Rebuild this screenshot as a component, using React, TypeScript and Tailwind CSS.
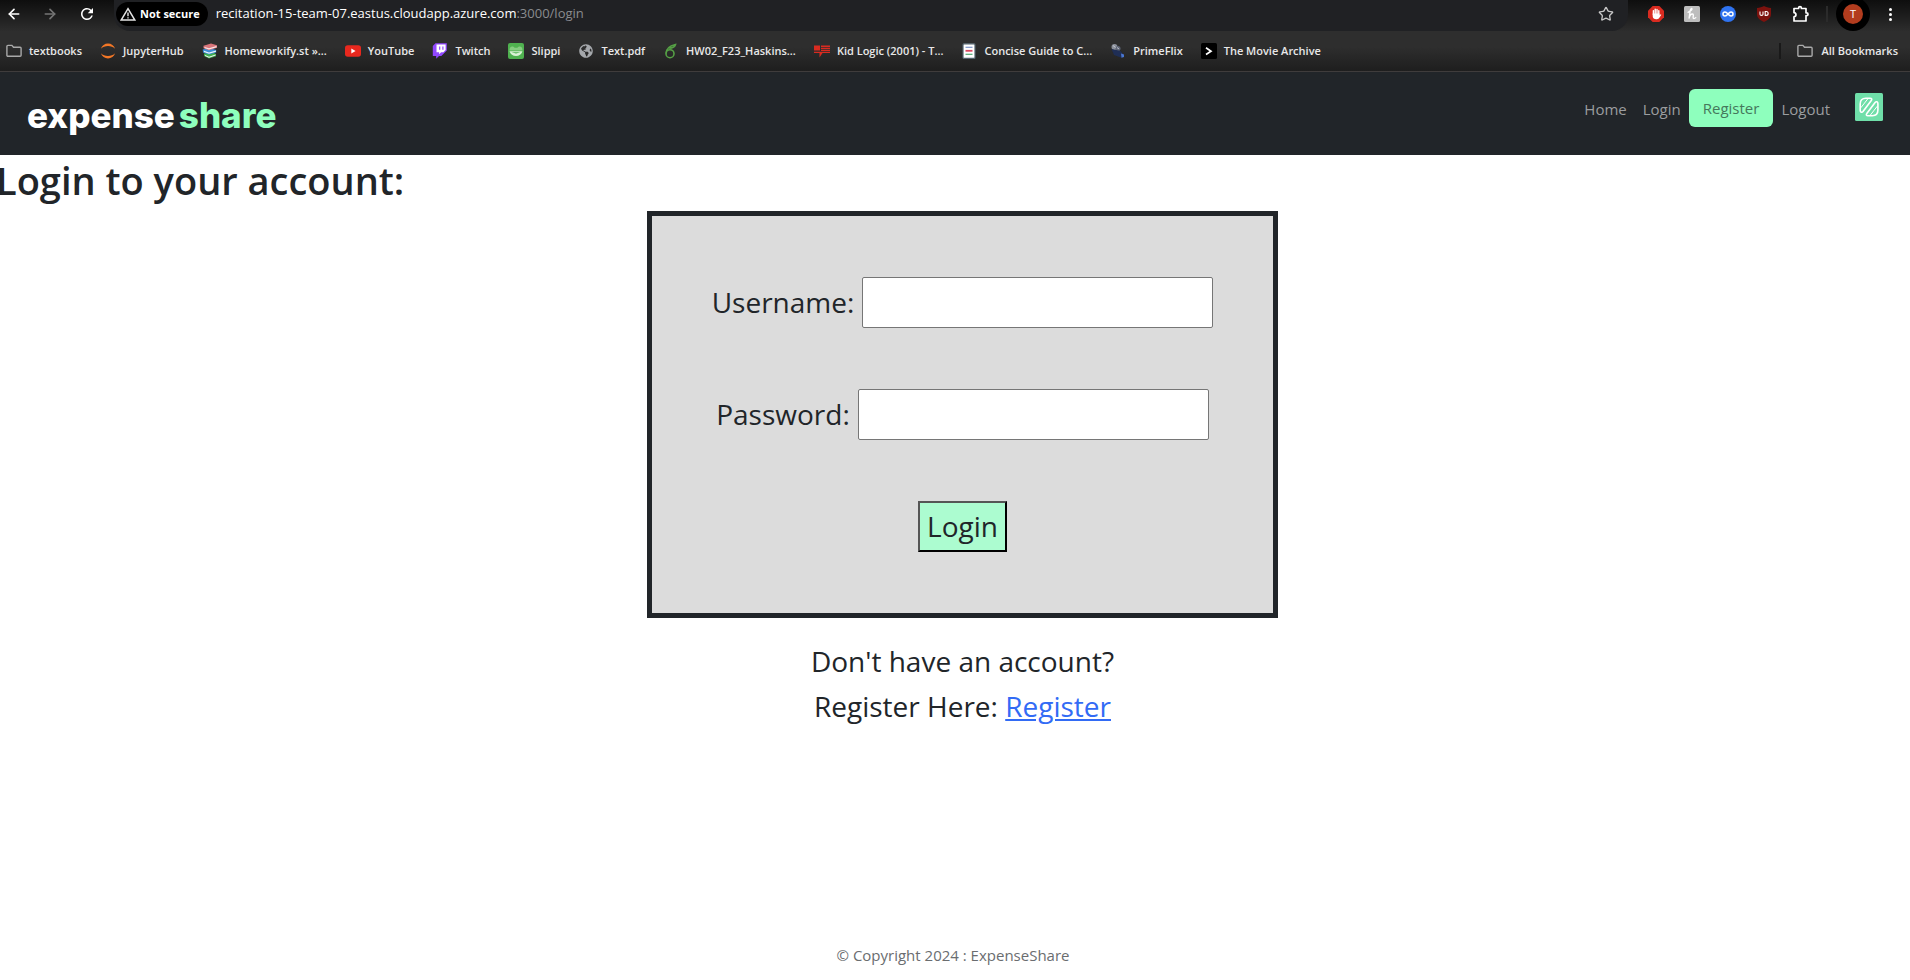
import React from "react";
import {
  ArrowLeft,
  ArrowRight,
  Star,
  Infinity as InfinityIcon,
} from "lucide-react";
import { MdRefresh } from "react-icons/md";
import { FaGlobeAmericas } from "react-icons/fa";

function FolderIcon() {
  return (
    <svg viewBox="0 0 16 16" className="size-4" fill="none" stroke="#a9a9a9" strokeWidth="1.4">
      <path d="M.9 12.3V3.4a1 1 0 0 1 1-1h4l1.6 1.9h6.6a1 1 0 0 1 1 1v7a1 1 0 0 1-1 1H1.9a1 1 0 0 1-1-1z" />
    </svg>
  );
}

function JupyterIcon() {
  return (
    <svg viewBox="0 0 16 16" className="size-4" fill="#f37726">
      <path d="M.9 5.7C2 2.5 4.700.5 8 .5s6 2 7.100 5.200C13.300 4 10.800 3.100 8 3.100S2.700 4 .9 5.700z" />
      <path d="M.9 10.300C2 13.500 4.700 15.500 8 15.500s6-2 7.100-5.200c-1.800 1.700-4.300 2.600-7.100 2.600s-5.300-.9-7.100-2.600z" />
    </svg>
  );
}

function BooksIcon() {
  return (
    <svg viewBox="0 0 16 16" className="size-4">
      <path d="M2 10.500l8-1.500 4 2v2.200l-7 2.300-5-2.500z" fill="#3fae4f" />
      <path d="M3 12l4 1.800 6.500-2.200v1L7 14.800l-4-1.800z" fill="#f4f4f4" />
      <path d="M.7 6.500l7-1.500 6.500 2v2.500L7 11.500l-6-2z" fill="#3b8fd6" />
      <path d="M2 7.800l5 1.700 7-2v1.200l-7 2-5-1.700z" fill="#eef4fa" />
      <path d="M1.500 2.800L9 .5l6 1.800v2.500l-8 2.400-5.500-2z" fill="#d9757a" />
      <path d="M2.500 3.900L7 5.300l7.500-2.300v1.200L7 6.500 2.500 5z" fill="#f8e9e9" />
    </svg>
  );
}

function YouTubeIcon() {
  return (
    <svg viewBox="0 0 16 16" className="size-4">
      <rect x="0" y="2.3" width="16" height="11.5" rx="2.8" fill="#e8281e" />
      <path d="M6.300 5.600v4.900L10.600 8z" fill="#fff" />
    </svg>
  );
}

function TwitchIcon() {
  return (
    <svg viewBox="0 0 16 16" className="size-4">
      <path d="M3.500.3L.8 3v10h3.400v2.800L7 13h2.300l5.500-5.500V.3z" fill="#9147ff" />
      <path d="M4.500 1.500h9.100v5.600l-2.200 2.200H9.100l-2 2v-2H4.500z" fill="#fff" />
      <path d="M7.100 3.500h1.200v3.300H7.100zM10.300 3.500h1.200v3.300h-1.200z" fill="#9147ff" />
    </svg>
  );
}

function SlippiIcon() {
  return (
    <svg viewBox="0 0 16 16" className="size-4">
      <rect width="16" height="16" rx="2" fill="#4fb14f" />
      <path d="M1.500 7.500c0-2.500 1-4 2.800-4 1.200 0 1.900.6 2.200 1.300h3c.3-.7 1-1.300 2.200-1.300 1.800 0 2.800 1.500 2.800 4z" fill="#86cc80" />
      <path d="M1.500 8.300h13c-.8 3-3.400 4.700-6.500 4.700S2.300 11.300 1.500 8.300z" fill="#d9f2d5" />
      <path d="M3.500 9.300h9l-4.500 1.200z" fill="#4fb14f" />
    </svg>
  );
}

function LeafSixIcon() {
  return (
    <svg viewBox="0 0 16 16" className="size-4" fill="none" stroke="#55a045" strokeWidth="1.6">
      <circle cx="7" cy="10.7" r="4" />
      <path d="M3.200 10.500C3 6.500 6 3 12.500 1.500 12 3.500 9.500 5 6.200 5.300" />
    </svg>
  );
}

function RadioIcon() {
  return (
    <svg viewBox="0 0 16 16" className="size-4" fill="#d92b20">
      <path d="M0 2.500h6v5H0zM7 2.500h9v1.400H7zM7 4.700h9v1.200H7zM7 6.700h9v1.200H7zM0 8.700h16V10H8.500l-3 4.500V10H0z" />
    </svg>
  );
}

function GuideIcon() {
  return (
    <svg viewBox="0 0 16 16" className="size-4">
      <rect x="2" y=".8" width="12" height="14.6" rx="1" fill="#fff" stroke="#52616b" strokeWidth="1.2" />
      <path d="M4.500 4.300h7" stroke="#7b93c8" strokeWidth="1.2" />
      <path d="M4.500 7.800h7" stroke="#dc4760" strokeWidth="1.8" />
      <path d="M4.500 11.300h7" stroke="#4fa870" strokeWidth="1.2" />
    </svg>
  );
}

function CameraIcon() {
  return (
    <svg viewBox="0 0 16 16" className="size-4">
      <circle cx="4.5" cy="4" r="3" fill="#8a8f9a" />
      <circle cx="8" cy="5.5" r="2.5" fill="#5d6476" />
      <path d="M1.500 6l9 2 3 3.500-2 3.200L4 12z" fill="#1f2e55" />
      <path d="M11 10.500l3 1v2.500l-2.500.8z" fill="#4a76d0" />
      <path d="M3 2.500l2.500 2M7 4.500l2 1.500" stroke="#d4d8df" strokeWidth=".8" />
    </svg>
  );
}

function TerminalIcon() {
  return (
    <svg viewBox="0 0 16 16" className="size-4">
      <rect width="16" height="16" rx="1.5" fill="#000" />
      <path d="M5 4.700L10 8.200l-5 3.300" fill="none" stroke="#fff" strokeWidth="1.7" />
    </svg>
  );
}

function WarningIcon() {
  return (
    <svg viewBox="0 0 16 14" className="h-[14px] w-4" fill="none">
      <path d="M8 1.600L14.700 12.900H1.300z" stroke="#e3e3e3" strokeWidth="1.5" />
      <path d="M8 5.500v3.800M8 10.300v1.300" stroke="#e3e3e3" strokeWidth="1.4" />
    </svg>
  );
}

function AdBlockIcon() {
  return (
    <svg viewBox="0 0 16 16" className="size-4">
      <path d="M4.700 0h6.600L16 4.700v6.600L11.300 16H4.700L0 11.300V4.700z" fill="#d92b20" />
      <path
        d="M5.400 8.500V4.600M7.200 8V3.200M9 8V3.400M10.800 8.500V4.700"
        stroke="#fff"
        strokeWidth="1.4"
        strokeLinecap="round"
      />
      <path d="M4.700 7.500h6.800v1.800l1-.9c.6-.2.900.2.700.6L11 12.300c-.7.800-1.700 1-2.800 1-2 0-3.500-1.300-3.500-3z" fill="#fff" />
    </svg>
  );
}

function HoneyIcon() {
  return (
    <svg viewBox="0 0 16 16" className="size-4">
      <rect width="16" height="16" rx="1.5" fill="#bdbdbd" />
      <path
        d="M4 6.300c2-1 4.200-2.300 4-3.400-.3-1-1.500 0-1.800 1.700L5 12.700c.6-2.700 1.800-4.700 3.300-4.700s1 1.800.8 3.200c-.1 1.800 1.400 1.700 2.700.4"
        fill="none"
        stroke="#fff"
        strokeWidth="1.3"
        strokeLinecap="round"
      />
    </svg>
  );
}

function ShieldIcon() {
  return (
    <svg viewBox="0 0 16 16" className="size-4">
      <path d="M8 0c2 1.200 4.300 1.800 7 1.900V8c0 4-3 6.300-7 8-4-1.700-7-4-7-8V1.900C3.700 1.800 6 1.200 8 0z" fill="#7d120e" />
      <path
        d="M4 5.500v2.700c0 1.600 3 1.600 3 0V5.500M9.200 5.500h1a1.900 1.900 0 0 1 0 3.900h-1z"
        fill="none"
        stroke="#fff"
        strokeWidth="1.1"
      />
    </svg>
  );
}

function PuzzleIcon() {
  return (
    <svg viewBox="0 0 18 18" className="size-[18px]" fill="none" stroke="#fff" strokeWidth="1.7" strokeLinejoin="round">
      <path d="M2 3.500h4.600V3a1.400 1.400 0 0 1 2.800 0v.5H14v4.300h.6a1.400 1.400 0 0 1 0 2.800H14v5.400H2v-4.200c2.600-.3 2.600-3.800 0-4.100z" />
    </svg>
  );
}

function BrandMark() {
  return (
    <svg viewBox="0 0 28 28" className="size-7" fill="none" stroke="#fff" strokeWidth="1.6" strokeLinejoin="round">
      <rect width="28" height="28" rx="1.5" fill="#6fdfa9" stroke="none" />
      <path d="M5.200 17.500V11C5.200 7.200 7.200 5.300 10.800 5.300h4.400c1.500 0 2 1 1.100 2.100L8 18.500c-1.100 1.400-2.800.7-2.800-1z" />
      <path d="M22.900 10.500V17c0 3.800-2 5.700-5.600 5.700h-4.400c-1.500 0-2-1-1.100-2.100L20.100 9.500c1.100-1.400 2.800-.7 2.800 1z" />
      <path d="M5.800 14.800L13 5.600M22.300 13.200L15.100 22.400" strokeWidth="1" />
    </svg>
  );
}

const bookmarks: { label: string; icon: React.ReactNode }[] = [
  { label: "textbooks", icon: <FolderIcon /> },
  { label: "JupyterHub", icon: <JupyterIcon /> },
  { label: "Homeworkify.st »...", icon: <BooksIcon /> },
  { label: "YouTube", icon: <YouTubeIcon /> },
  { label: "Twitch", icon: <TwitchIcon /> },
  { label: "Slippi", icon: <SlippiIcon /> },
  { label: "Text.pdf", icon: <FaGlobeAmericas className="size-[14px] text-[#a5a8ac]" /> },
  { label: "HW02_F23_Haskins...", icon: <LeafSixIcon /> },
  { label: "Kid Logic (2001) - T...", icon: <RadioIcon /> },
  { label: "Concise Guide to C...", icon: <GuideIcon /> },
  { label: "PrimeFlix", icon: <CameraIcon /> },
  { label: "The Movie Archive", icon: <TerminalIcon /> },
];

function Toolbar() {
  return (
    <div className="flex h-[31px] items-start bg-linear-to-b from-[#0e0e0e] to-[#2d2d2d] pr-3">
      <div className="flex h-7 items-center gap-5 pl-1.5">
        <button type="button" aria-label="Back" className="text-white">
          <ArrowLeft className="size-4" strokeWidth={2.5} />
        </button>
        <button type="button" aria-label="Forward" className="text-[#757575]">
          <ArrowRight className="size-4" strokeWidth={2.5} />
        </button>
        <button type="button" aria-label="Reload" className="text-white">
          <MdRefresh className="size-[18px]" />
        </button>
      </div>
      <div className="ml-[18px] flex h-[31px] flex-1 items-start rounded-b-2xl bg-[#202124] pr-3.5">
        <button
          type="button"
          className="mt-0.5 ml-0.5 flex h-6 items-center gap-1 rounded-full bg-black pr-2 pl-1 text-[11px] font-bold text-white"
        >
          <WarningIcon />
          Not secure
        </button>
        <div className="flex h-7 flex-1 items-center pl-2 text-[13px] text-white">
          <span>recitation-15-team-07.eastus.cloudapp.azure.com</span>
          <span className="text-[#8a8c8f]">:3000/login</span>
        </div>
        <button type="button" aria-label="Bookmark this page" className="flex h-7 items-center text-[#c7c7c7]">
          <Star className="size-4" strokeWidth={2} />
        </button>
      </div>
      <div className="ml-5 flex h-7 items-center gap-5">
        <AdBlockIcon />
        <HoneyIcon />
        <span className="flex size-4 items-center justify-center rounded-full bg-[#2f73f0] text-white">
          <InfinityIcon className="size-3" strokeWidth={3} />
        </span>
        <ShieldIcon />
        <PuzzleIcon />
      </div>
      <div className="mt-1.5 ml-4 h-4 w-0.5 bg-[#2b2b2b]" />
      <div className="-mt-[3px] ml-2 flex size-[34px] items-center justify-center rounded-full bg-black">
        <span className="flex size-5 items-center justify-center rounded-full bg-[#b23c1e] text-[11px] text-white">T</span>
      </div>
      <button type="button" aria-label="Menu" className="ml-3 flex h-7 w-4 flex-col items-center justify-center gap-0.5">
        <span className="size-[3px] rounded-full bg-white" />
        <span className="size-[3px] rounded-full bg-white" />
        <span className="size-[3px] rounded-full bg-white" />
      </button>
    </div>
  );
}

function BookmarkBar() {
  return (
    <div className="flex h-[41px] items-center justify-between border-b border-[#3f3c3c] bg-linear-to-b from-[#2e2e2e] from-40% to-[#1e1e1e] pr-3 pl-1.5 text-[11px] font-semibold text-[#e8e8e8]">
      <div className="flex items-center gap-[18px]">
        {bookmarks.map((b) => (
          <a key={b.label} href="#" className="flex items-center gap-[7px] whitespace-nowrap">
            <span className="flex size-4 items-center justify-center">{b.icon}</span>
            {b.label}
          </a>
        ))}
      </div>
      <div className="flex items-center gap-4">
        <div className="h-4 w-0.5 bg-[#191919]" />
        <a href="#" className="flex items-center gap-2 whitespace-nowrap">
          <FolderIcon />
          All Bookmarks
        </a>
      </div>
    </div>
  );
}

export default function App() {
  return (
    <div className="flex min-h-screen flex-col overflow-x-hidden bg-white font-['Open_Sans','Noto_Sans',sans-serif] text-[#212529]">
      <Toolbar />
      <BookmarkBar />
      <header className="flex h-[83px] items-start justify-between bg-[#212529] px-[27px]">
        <a href="#" className="flex gap-1 pt-[21px] font-['Inter',sans-serif] text-[35px] leading-[44px] font-extrabold text-white">
          <span>expense</span>
          <span className="text-[#8effbd]">share</span>
        </a>
        <nav className="flex items-start pt-[17px] text-[15px] leading-6 text-[#9b9d9f]">
          <a href="#" className="px-2 py-2">Home</a>
          <a href="#" className="px-2 py-2">Login</a>
          <a href="#" className="rounded-md bg-[#8effbd] px-3.5 py-[7px] text-[#45785c]">Register</a>
          <a href="#" className="px-2 py-2">Logout</a>
          <a href="#" aria-label="ExpenseShare" className="mt-1 ml-[17px]">
            <BrandMark />
          </a>
        </nav>
      </header>
      <main className="flex-1">
        <h1 className="-ml-1 pt-px pb-[7px] text-[38px] leading-[48px] font-semibold">Login to your account:</h1>
        <div className="flex flex-col items-center pl-[15px] text-[28px] leading-[45px]">
          <form
            className="flex w-1/3 min-w-[600px] flex-col items-center gap-[61px] border-5 border-[#212529] bg-[#dcdcdc] py-[61px]"
            onSubmit={(e) => e.preventDefault()}
          >
            <div className="flex items-center gap-2">
              <label htmlFor="username">Username:</label>
              <input id="username" type="text" className="h-[51px] w-[351px] rounded-xs border border-[#767676] bg-white px-1" />
            </div>
            <div className="flex items-center gap-2">
              <label htmlFor="password">Password:</label>
              <input id="password" type="password" className="h-[51px] w-[351px] rounded-xs border border-[#767676] bg-white px-1" />
            </div>
            <button
              type="submit"
              className="h-[51px] border-2 border-t-[#555] border-r-black border-b-black border-l-[#555] bg-[#acfcd0] px-[7px]"
            >
              Login
            </button>
          </form>
          <p className="pt-[21px] text-center">
            Don't have an account?
            <br />
            Register Here:{" "}
            <a href="#" className="text-[#326bf5] underline">
              Register
            </a>
          </p>
        </div>
      </main>
      <footer className="pr-1 pb-[13px] text-center text-[15px] leading-6 text-[#6a6d70]">© Copyright 2024 : ExpenseShare</footer>
    </div>
  );
}
